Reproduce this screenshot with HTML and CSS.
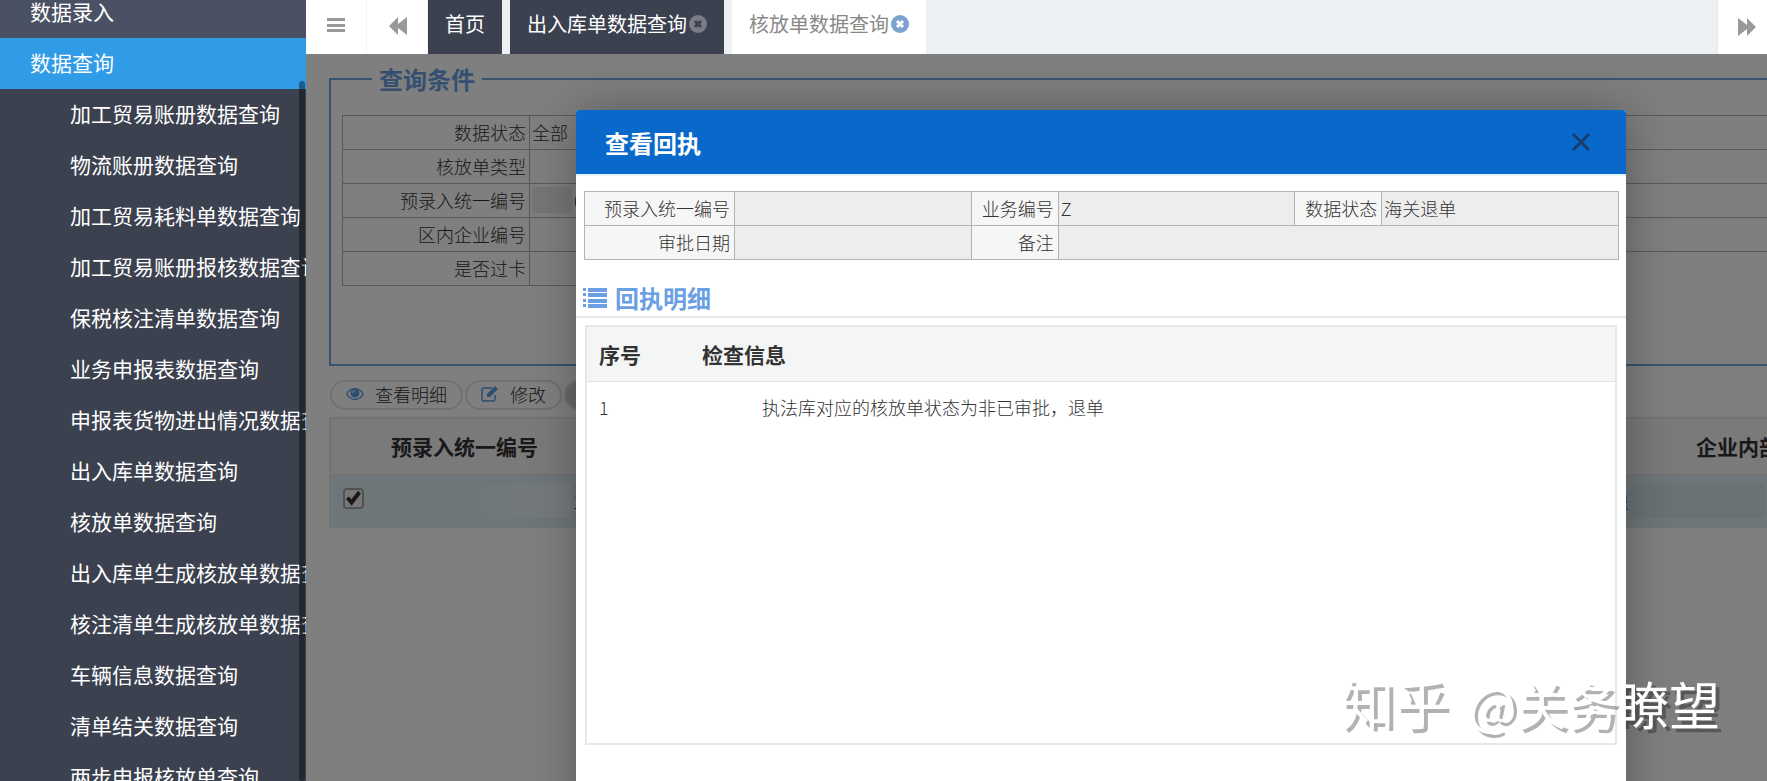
FILE: index.html
```html
<!DOCTYPE html>
<html lang="zh-CN">
<head>
<meta charset="utf-8">
<title>核放单数据查询</title>
<link rel="stylesheet" href="styles.css">
</head>
<body>
<div class="app">
  <nav class="sidebar">
    <ul class="menu">
      <li><a class="menu-link" href="#">数据录入</a></li>
      <li>
        <a class="menu-link active" href="#">数据查询</a>
        <ul class="submenu">
          <li><a class="menu-link" href="#">加工贸易账册数据查询</a></li>
          <li><a class="menu-link" href="#">物流账册数据查询</a></li>
          <li><a class="menu-link" href="#">加工贸易耗料单数据查询</a></li>
          <li><a class="menu-link" href="#">加工贸易账册报核数据查询</a></li>
          <li><a class="menu-link" href="#">保税核注清单数据查询</a></li>
          <li><a class="menu-link" href="#">业务申报表数据查询</a></li>
          <li><a class="menu-link" href="#">申报表货物进出情况数据查询</a></li>
          <li><a class="menu-link" href="#">出入库单数据查询</a></li>
          <li><a class="menu-link" href="#">核放单数据查询</a></li>
          <li><a class="menu-link" href="#">出入库单生成核放单数据查询</a></li>
          <li><a class="menu-link" href="#">核注清单生成核放单数据查询</a></li>
          <li><a class="menu-link" href="#">车辆信息数据查询</a></li>
          <li><a class="menu-link" href="#">清单结关数据查询</a></li>
          <li><a class="menu-link" href="#">两步申报核放单查询</a></li>
        </ul>
      </li>
    </ul>
    <div class="scroll-thumb"></div>
  </nav>

  <div class="main">
    <header class="tabs">
      <button class="tab-tool" type="button" aria-label="菜单">
        <svg width="18" height="16" viewBox="0 0 18 16"><path d="M0 1h18v3H0zM0 7h18v3H0zM0 12h18v3H0z" fill="#999"/></svg>
      </button>
      <button class="tab-tool" type="button" aria-label="向左">
        <svg width="18" height="18" viewBox="0 0 18 18"><path d="M9 0v7l9-7v18l-9-7v7L0 9z" fill="#999"/></svg>
      </button>
      <a class="tab dark" href="#">首页</a>
      <div class="tab dark"><a href="#">出入库单数据查询</a><button class="tab-close" type="button" aria-label="关闭">
        <svg width="18" height="18" viewBox="0 0 18 18"><circle cx="9" cy="9" r="9" fill="#7a7d84"/><path d="M6 6l6 6M12 6l-6 6" stroke="#3b414f" stroke-width="3"/></svg></button></div>
      <div class="tab current"><a href="#">核放单数据查询</a><button class="tab-close" type="button" aria-label="关闭">
        <svg width="18" height="18" viewBox="0 0 18 18"><circle cx="9" cy="9" r="9" fill="#7ba3cf"/><path d="M6 6l6 6M12 6l-6 6" stroke="#fff" stroke-width="3"/></svg></button></div>
      <button class="tab-tool last" type="button" aria-label="向右">
        <svg width="18" height="18" viewBox="0 0 18 18"><path d="M0 0l9 7V0l9 9-9 9v-7l-9 7z" fill="#999"/></svg>
      </button>
    </header>

    <div class="content">
      <fieldset class="query">
        <legend>查询条件</legend>
        <table class="form-table">
          <colgroup><col class="q-label"><col class="q-value"><col class="q-label"><col></colgroup>
          <tr><th><label for="q1">数据状态</label></th><td><input id="q1" value="全部"></td><th></th><td></td></tr>
          <tr><th><label for="q2">核放单类型</label></th><td><input id="q2"></td><th></th><td></td></tr>
          <tr><th><label for="q3">预录入统一编号</label></th><td><div class="masked"><span class="mask"></span><input id="q3" value="0"></div></td><th></th><td></td></tr>
          <tr><th><label for="q4">区内企业编号</label></th><td><input id="q4"></td><th></th><td></td></tr>
          <tr><th><label for="q5">是否过卡</label></th><td><input id="q5"></td></tr>
        </table>
      </fieldset>

      <div class="toolbar">
        <button class="pill" type="button">
          <svg width="18" height="14" viewBox="0 0 18 14"><path fill="#5b9be0" d="M9 1C5 1 2 3.500 0 7c2 3.500 5 6 9 6s7-2.500 9-6c-2-3.500-5-6-9-6z"/><path fill="#fff" d="M9 2.200C5.800 2.200 3.400 4 1.500 7c1.900 3 4.300 4.800 7.500 4.800s5.600-1.800 7.500-4.800C14.600 4 12.200 2.200 9 2.200z"/><circle cx="9" cy="6" r="4.500" fill="#5b9be0"/><path d="M6.500 6A2.500 2.500 0 0 1 9 3.500" fill="none" stroke="#fff"/></svg>
          查看明细</button>
        <button class="pill" type="button">
          <svg width="18" height="16" viewBox="0 0 18 16"><path d="M14 9v4q0 2-2 2H3q-2 0-2-2V4q0-2 2-2h8" fill="none" stroke="#5b9be0" stroke-width="1.500"/><path d="M6 11V8l8-8 3 3-8 8z" fill="#5b9be0"/></svg>
          修改</button>
        <button class="pill filled" type="button" aria-label="更多"></button>
      </div>

      <table class="grid">
        <colgroup><col class="g-check"><col class="g-no"><col class="g-gap"><col></colgroup>
        <thead><tr><th></th><th>预录入统一编号</th><th></th><th>企业内部编号</th></tr></thead>
        <tbody><tr>
          <td><input class="check" type="checkbox" checked aria-label="选择"></td>
          <td><div class="masked"><span class="mask light"></span>1</div></td>
          <td class="end">退</td>
          <td><div class="masked"><span class="mask cool"></span>9</div></td>
        </tr></tbody>
      </table>

      <div class="shade"></div>

      <section class="dialog" role="dialog" aria-labelledby="dlg-title">
        <header class="dialog-head">
          <h2 id="dlg-title">查看回执</h2>
          <button class="dialog-close" type="button" aria-label="关闭">
            <svg width="18" height="18" viewBox="0 0 18 18"><path d="M1 1l16 16M17 1L1 17" stroke="#163f70" stroke-width="3"/></svg>
          </button>
        </header>
        <table class="form-table receipt">
          <colgroup><col class="r-first"><col><col class="r-label"><col><col class="r-label"><col></colgroup>
          <tr>
            <th><label for="r1">预录入统一编号</label></th><td><input id="r1" readonly></td>
            <th><label for="r2">业务编号</label></th><td><input id="r2" value="Z" readonly></td>
            <th><label for="r3">数据状态</label></th><td><input id="r3" value="海关退单" readonly></td>
          </tr>
          <tr>
            <th><label for="r4">审批日期</label></th><td><input id="r4" readonly></td>
            <th><label for="r5">备注</label></th><td colspan="3"><input id="r5" readonly></td>
          </tr>
        </table>
        <h3 class="section">
          <svg width="24" height="20" viewBox="0 0 24 20"><path fill="#6b9fe3" d="M0 0h3v3H0zM5 0h19v4H5zM0 5h3v3H0zM5 5h19v4H5zM0 11h3v3H0zM5 11h19v4H5zM0 16h3v3H0zM5 16h19v4H5z"/></svg>
          回执明细</h3>
        <div class="detail">
          <table class="detail-table">
            <colgroup><col class="d-no"><col></colgroup>
            <thead><tr><th>序号</th><th>检查信息</th></tr></thead>
            <tbody><tr><td>1</td><td class="info">执法库对应的核放单状态为非已审批，退单</td></tr></tbody>
          </table>
        </div>
      </section>
    </div>
  </div>
  <div class="watermark"><span class="brand">知乎</span> @关务瞭望</div>
</div>
</body>
</html>
```
FILE: styles.css
```css
* { box-sizing: border-box; }

body {
  margin: 0;
  font-family: "Noto Sans CJK SC", sans-serif;
  font-size: 18px;
  color: #333;
}

a { color: inherit; text-decoration: none; }
ul { list-style: none; margin: 0; padding: 0; }
svg { display: block; flex: none; }

button, input {
  font: inherit;
  color: inherit;
  border: 0;
  padding: 0;
  background: none;
}

.app {
  display: flex;
  position: relative;
  height: 100vh;
  overflow: hidden;
}

/* Sidebar */
.sidebar {
  position: relative;
  flex: none;
  width: 306px;
  overflow: hidden;
  background: #3b414f;
  color: #fff;
}

/* scrolled list: the first entry is partly above the top edge */
.menu { margin-top: -13px; }

.menu-link {
  display: block;
  padding: 0 0 2px 30px;
  font-size: 21px;
  line-height: 49px;
  white-space: nowrap;
  background: #4b5165;
}

.menu-link.active { background: #309ce8; }
.submenu .menu-link { padding-left: 70px; background: none; }

.scroll-thumb {
  position: absolute;
  top: 81px;
  right: 1px;
  bottom: 0;
  width: 6px;
  border-radius: 6px;
  background: rgba(0, 0, 0, .4);
}

/* Tabs */
.main {
  display: flex;
  flex-direction: column;
  flex: 1;
  min-width: 0;
}

.tabs {
  display: flex;
  gap: 8px;
  flex: none;
  height: 54px;
  background: #edf1f3;
}

.tab-tool {
  display: flex;
  align-items: center;
  justify-content: center;
  width: 61px;
  padding-bottom: 4px;
  background: #fff;
  border-right: 1px solid #f3f3f3;
}

.tab-tool + .tab-tool, .tab-tool + .tab { margin-left: -8px; }
.tab-tool + .tab-tool:not(.last) { padding: 0 0 2px 1px; }

.tab-tool.last {
  width: 50px;
  margin-left: auto;
  padding: 0 0 0 8px;
  border-right: 0;
  border-left: 1px solid #e3e7e9;
}

.tab {
  display: flex;
  align-items: center;
  gap: 2px;
  padding: 0 17px 6px;
  font-size: 20px;
  line-height: 24px;
  white-space: nowrap;
}

.tab.dark { background: #3b414f; color: #fff; }
.tab.current { background: #fff; color: #888; }

/* Page under the dialog */
.content {
  position: relative;
  flex: 1;
  min-height: 0;
  padding: 10px 0 0 23px;
  overflow: hidden;
  background: #fff;
}

.query {
  height: 302px;
  margin: 0 -20px 0 0;
  padding: 21px 0 0 11px;
  border: 2px solid #6fa8e2;
}

.query legend {
  margin-left: 30px;
  padding: 0 7px;
  font-size: 24px;
  line-height: 30px;
  font-weight: 700;
  color: #6b9fe3;
}

.form-table {
  width: 100%;
  table-layout: fixed;
  border-collapse: collapse;
  font-weight: 300;
}

.form-table th, .form-table td {
  height: 34px;
  padding: 0 2px 2px;
  border: 1px solid #b3b3b3;
  line-height: 26px;
}

.form-table th { padding-right: 3px; font-weight: 300; text-align: right; white-space: nowrap; }
.form-table input { display: block; width: 100%; height: 26px; }
.q-label { width: 187px; }
.q-value { width: 300px; }

.masked { display: flex; align-items: center; gap: 2px; }
.mask { flex: none; width: 40px; height: 26px; background: #ececec; }

.toolbar {
  display: flex;
  gap: 2px;
  padding: 14px 0 7px 1px;
}

.pill {
  display: flex;
  align-items: center;
  gap: 11px;
  height: 30px;
  padding: 0 14px 2px;
  border: 2px solid #e1e1e1;
  border-radius: 15px;
  font-weight: 300;
  line-height: 24px;
}

.pill.filled { width: 80px; background: #d0d0d0; }

.grid {
  width: 100%;
  table-layout: fixed;
  border-collapse: collapse;
  border-left: 2px solid #e5e8e9;
}

.grid th {
  height: 56px;
  padding: 0;
  background: #f4f5f5;
  border-top: 2px solid #e5e8e9;
  border-bottom: 1px solid #e0e3e4;
  font-size: 21px;
  line-height: 30px;
  text-align: left;
  white-space: nowrap;
}

.grid th:last-child { padding-left: 67px; }
.grid td { height: 54px; padding: 0; background: #deedf2; font-weight: 300; }
.grid td:first-child { padding-left: 12px; }
.grid .end { text-align: right; }
.g-check { width: 61px; }
.g-no { width: 190px; }
.g-gap { width: 1048px; }
.mask.light { width: 180px; height: 34px; background: linear-gradient(90deg, #deedf2 40%, #edf5f8); }
.mask.cool { width: 136px; height: 34px; background: #d7e4ea; }

.check {
  display: block;
  position: relative;
  appearance: none;
  width: 21px;
  height: 21px;
  margin: 0 0 6px;
  border: 2px solid #a5a5a5;
  border-radius: 4px;
  background: #eee;
}

.check:checked::after {
  content: "";
  position: absolute;
  inset: 1px;
  background: #333;
  clip-path: polygon(0 55%, 18% 38%, 36% 56%, 80% 0, 100% 18%, 38% 100%);
}

.shade {
  position: absolute;
  inset: 0;
  background: rgba(0, 0, 0, .5);
}

/* Dialog */
.dialog {
  position: absolute;
  top: 56px;
  left: 270px;
  right: 141px;
  height: 800px;
  border-radius: 3px;
  background: #fff;
  box-shadow: 1px 1px 50px rgba(0, 0, 0, .3);
}

.dialog-head {
  display: flex;
  align-items: center;
  justify-content: space-between;
  height: 66px;
  padding: 0 36px 0 29px;
  border-bottom: 2px solid #e3f4fb;
  border-radius: 3px 3px 0 0;
  background: #0869ca;
  background-clip: padding-box;
}

.dialog-head h2 {
  margin: 0;
  padding-top: 2px;
  font-size: 24px;
  line-height: 36px;
  color: #fff;
}

.receipt { width: auto; min-width: calc(100% - 15px); margin: 15px 7px 0 8px; }
.receipt th { padding-right: 4px; background: #f6f6f6; }
.receipt td { background: #ededed; }
.r-first { width: 150px; }
.r-label { width: 87px; }

.section {
  display: flex;
  align-items: center;
  gap: 8px;
  margin: 20px 0 7px;
  padding: 0 7px;
  border-bottom: 2px solid #e5e8e9;
  font-size: 24px;
  line-height: 36px;
  color: #6b9fe3;
}

.detail {
  height: 420px;
  margin: 0 9px;
  border: 2px solid #e5e8e9;
}

.detail-table {
  width: 100%;
  table-layout: fixed;
  border-collapse: collapse;
}

.detail-table th {
  height: 54px;
  padding: 0 12px;
  background: #f4f5f5;
  border-bottom: 1px solid #e0e3e4;
  font-size: 21px;
  line-height: 30px;
  text-align: left;
}

.detail-table td { height: 52px; padding: 0 12px; font-weight: 300; }
.detail-table .info { padding-left: 72px; }
.d-no { width: 103px; }

.watermark {
  position: absolute;
  right: 47px;
  bottom: 41px;
  font-size: 51px;
  line-height: 74px;
  color: #fff;
  text-shadow: 4px 4px 0 rgba(0, 0, 0, .3);
  white-space: nowrap;
}

.brand { margin-right: 8px; font-size: 54px; }
```
